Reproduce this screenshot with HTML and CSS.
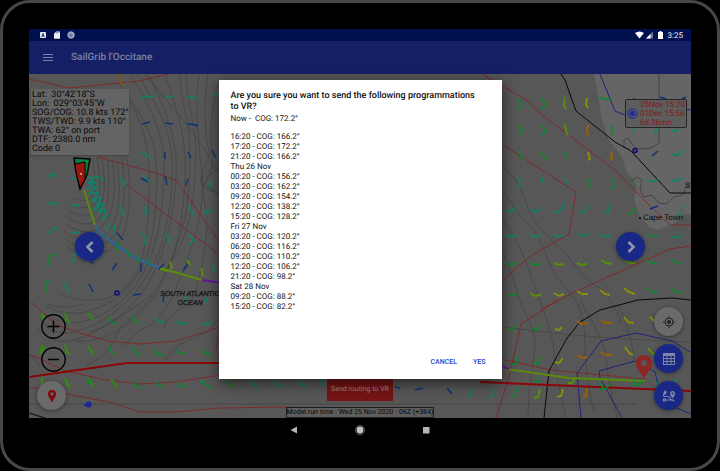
FILE: index.html
```html
<!DOCTYPE html>
<html lang="en">
<head>
<meta charset="utf-8">
<meta name="viewport" content="width=device-width, initial-scale=1">
<title>SailGrib l'Occitane</title>
<link rel="stylesheet" href="styles.css">
</head>
<body>
<div class="device">
  <div class="screen">
    <div class="status">
      <div class="status-group">
        <svg width="8" height="8" viewBox="0 0 8 8"><rect x="1" y="1" width="6" height="6" rx="1" fill="#e8eaf2"/><path d="M2.7 6 4 2.5 5.3 6M3.2 4.9h1.6" fill="none" stroke="#000f4d" stroke-width=".8"/></svg>
        <svg width="8" height="8" viewBox="0 0 8 8"><path d="M3.2.5H7V7.700H1V2.700z" fill="#eceef5"/><path d="M3.500 1.200v1M4.700 1.200v1M5.900 1.200v1" stroke="#000f4d" stroke-width=".5"/></svg>
        <svg width="8" height="8" viewBox="0 0 8 8"><circle cx="4" cy="4" r="3.500" fill="#9aa2c0"/><circle cx="3.700" cy="4.200" r="2" fill="#6f7aa6"/><circle cx="4" cy="4" r="3" fill="none" stroke="#b8bed4" stroke-dasharray="1 .6"/></svg>
      </div>
      <div class="status-group status-right">
        <svg width="9" height="8" viewBox="0 0 9 8"><path d="M0 2Q4.500-1.200 9 2L4.500 7.500z" fill="#fff"/></svg>
        <svg width="7" height="8" viewBox="0 0 7 8"><path d="M0 7.500 7 .5v7z" fill="#6b75a3"/><path d="M0 7.500 4.500 3v4.500z" fill="#fff"/></svg>
        <svg class="battery" width="5" height="8" viewBox="0 0 5 8"><path d="M1.500 0h2v1H5v7H0V1h1.500z" fill="#fff"/></svg>
        <span>3:25</span>
      </div>
    </div>
    <header class="appbar">
      <button class="menu" aria-label="Menu"><svg width="10" height="8" viewBox="0 0 10 8"><path d="M0 .5h10M0 3.500h10M0 6.500h10" stroke="#7d83a6"/></svg></button>
      <h1>SailGrib l'Occitane</h1>
    </header>
    <main class="map">
      <svg class="chart" viewBox="29 74 662 344" preserveAspectRatio="xMidYMid slice">
        <path fill="#575757" d="M29 74h662v344H29z"/>
        <path fill="#656565" d="M594 74l2 10 3 16 3 20 7 20 8 10 6 10 3 11 8 9 3 6-3 12 2 8 4 10 10 12 9 2 16-7 8-9h9V74z"/>
        <g class="line contour">
          <path d="M93 158c2 18 4 38-2 41s-13 1-17-1M97 158c4 22 4 42-3 47s-18 2-24-1M102 158c4 26 3 48-6 54s-22 2-28-2M107 158c4 28 2 54-9 62s-24 2-31-3M112 158c5 30 2 60-11 69s-27 3-35-3M117 158c5 35 2 68-13 77s-31 3-40-4M122 158c5 40 2 77-16 85s-32 3-41-5M127 158c6 45 1 86-19 93s-33 3-42-6"/>
          <path d="M127 96c16 28 22 50 22 80s-1 66-9 88-24 36-46 36-28-3-36-8M118 82c20 26 36 52 38 78s0 68-8 92-24 46-50 56-40 4-52-2M130 74c16 26 30 50 33 78s-2 74-10 98-24 52-54 66-46 3-54-2M137 74c16 24 30 48 34 76s-2 76-12 102-32 58-68 74-44 1-52-8M148 74c14 28 26 56 28 84s-6 74-15 98-30 64-70 76"/>
          <path d="M165 74c10 30 19 56 20 84s-3 70-11 94-15 44-37 64-42 26-62 25M180 74c0 22 8 44 9 60s2 60-5 88-22 62-36 79-28 22-31 33-15 26-30 31M186 74c1 28 8 46 9 66s1 48-5 76-18 44-24 55M199 74c-4 28-2 58 2 90s0 50-8 78-12 30-16 44-22 40-32 42-13 14-24 18M208 74c-4 24-3 44-2 60s4 12 3 20-9 18-8 26 18 10 19 20M219 80c-8 26-8 46-8 62s4 14 0 28-10 12-8 24 8 28-1 70-8 28-9 35-26 12-29 29"/>
          <path d="M220 158c-5 10-19 16-19 24s18 10 22 14M220 164c-5 8-15 14-15 18s12 7 18 12M145 74l50 61 25 39M38 328c13 17 30 15 45 9s22-13 36-20 33-23 33-23M46 303c8 5 25 5 36 1M29 354l11 12M222 313l-13 18-29 13-17 18"/>
          <path d="M502 166c20 15 20 30 28 46s24 32 38 44c10 14 20 27 33 33 7 6 16 20 20 34M502 192c14 14 13 20 24 30s16 22 22 38 18 28 26 38 11 30 11 48 4 50 9 65M502 218c16 22 26 48 32 66s18 46 20 68 8 50 12 66M494 230c8 20 18 44 23 62s20 38 18 55-7 40-7 71"/>
          <path d="M580 300c12 22 24 40 26 60s8 48 12 58M618 304c8 18 14 34 16 58M504 327c60 8 120 13 187 15M502 404h135M29 404h473"/>
        </g>
        <path class="line coast" d="M659 74v25M659 124v19l-8 5-13 1-6-5-4-6-4 2v7l6 3M691 183l-5 4-3 8-9 2-8 7-7-1-7-8-8 2-4-8 2-9-5-3-6 4"/>
        <path class="line red" d="M29 79l40 9 70-7 29-7M98 157l58 16 21 8 43 62M126 184l94 71M29 300l26 24 25 9 28 8 33 3 35-3 44-14M29 354l37 17 40 9 35 4 35-2 44-7M29 387l80 15 31 10h36l43-4 71-1M29 157l30-10M482 74l21 12 26 16 8 9 79 60 30 31 24 23h21M503 145l73 47-7 42-40 23-27 24M540 310l35-18 95-43 21-3M496 418l13-41 12-53 22-14 14-10M496 358l55 12 93 9M222 318l-6 32"/>
        <path class="line orange" d="M118 74l4 12"/>
        <path class="line blue" d="M600 74l15 37 12 5M691 110l-5-1M581 418l-4-45 24-32 35-8 36 8 20 12M622 418l-22-40-1-7 36-10 20 11 7 30 29 12"/>
        <path class="line black" d="M561 74l4 6 11 31 39 31 16 9 39 42h21M544 418l5-47 18-33 13-16 20-12 38-10 34-2 19 2M29 413l16 5"/>
        <path class="line route" d="M29 377l98-14h95M480 382l211 9"/>
        <path class="line lime" d="M84 190l11 35M160 268l42 12M506 369l63 9 76 3"/>
        <path class="line azure" d="M95 225l5 8 35 25 25 10"/>
        <path class="line violet" d="M202 280l20 3M500 365l9 4"/>
        <g class="line barb">
          <path class="teal" d="M142 98l6-2 5 1M165 98l7-2 2 1M188 97l9 1 1 3M213 96l5-3M142 152l7 5 1 3M47 177l6-3 5 4M72 178l7 2 3-1M95 176l9 4M119 177l6 6-2 4M143 175l2 5 5 2M210 188l2-10M47 205l6-3 5 3M72 205l8 1M119 205l5 7-3 5M143 206l4 6-2 4M189 205l4 10M204 210l3 4 5-6M48 234l7-7 3 3M72 233l8-1M142 233l4 6-2 6M165 233l5 7-2 4M189 233l4 7-3 5M213 264l2 8M72 262l3-9 4 2M67 282l-2 4 5 6M188 302l-3-7M207 302l-1-5"/>
          <path class="teal" d="M86 177l9 1-7 5 8-1-8 6 9-1-8 7 10-2-6 8 8-3-4 10 7-3-5 9 6-4-2 10 6-4M110 223l-3 9M115 225l-2 10M91 200l9 3-6 6 9 2"/>
          <path class="green" d="M47 268l3-12 5-1M46 292v-10l3-1M119 242l-3 9M127 249l2 8M137 254l2 8M147 258l2 8"/>
          <path class="blue" d="M142 124l8-2M165 123l8 1M188 124l9 1-1 2M165 152v7M188 152l3 6M212 150l4 8M141 178l7 4M165 176l2 9M188 179l-2 6M117 233l6 7M90 262l4 1M112 270l5-7M141 263v9M183 271l5-7M89 284l4 8M133 295l8-1M164 294l-1 8M159 269l5-5"/>
          <path class="g1" d="M42 313l3 8-3-5M65 313l2 7 3 3M88 313l5 7M42 345l-1 7 4-5M65 345l2 7 3 3M88 346l6 9M42 378v8M65 378l2 6 3 4M88 378l3 5 3 4M111 379l2 3 4 6"/>
          <path class="green" d="M108 317l4 5 5 2M132 316l3 5 5 2M109 345l2 6 5 4M132 347l3 5 6 3M88 378l1 6M133 380l2 5 6 3M155 381l3 4 6 2M177 382l3 5 7-1M202 380l4 5 5 3M225 380l4 4 5 3M185 353h-7l-1-4M202 349l3 4 6 2M154 349l3 5 7 1"/>
          <path class="teal" d="M155 317l4 5h6M177 319l2 5 9-1M201 323l4 2 6-3M201 380l2 4M249 379l4 6 4 2M273 379l4 6 4 2M297 379l4 6 5 2M320 379l4 8M470 388v8h-2M493 389v7l-3 2"/>
          <path class="blue" d="M395 387l5 1M415 390l8-2M447 388l5 6"/>
          <path class="green" d="M518 99l4 7-4 4M541 98l5 6-4 5M600 97l4 2h7M518 125l5 6-4 4M541 125l5 6-4 4M611 125l2 6-2 4M518 151l5 8M541 152l5 7-1 1M564 152l4 7M612 179l2 6-2 4M588 179l2 6-2 3M634 180l-1 6M628 214l5-1 2-5M647 235l5 1 6-1M506 263l4 2 7-2M530 262l4 3 7-1M647 260l5 3 6 1M671 259l5 4h6M507 294l4 2 6-2M671 288l4 4 6 1M647 288l5 4 6 1M508 329l4 1 5-5M532 329l5 1 4-5M512 364l5 0v-8M534 363l4 1 3-7M533 381l5 1 2-5M511 397l4-1 2-8M600 389l5 0 5-5M634 378l1 8 8-5M600 383l4 6"/>
          <path class="lime" d="M565 97l-1 8 2 4M565 124l1 7 2 4M554 263l5 2 5-1M577 263l5 2 5-1M601 260l5 3 6 1M625 260l5 3 5 0M530 293l5 3 6-1M534 398l4-1 2-8M568 383l4 0 3-4"/>
          <path class="teal" d="M518 178l2 6-3 4M542 178l2 7M565 178l2 7M506 210l5 2 6-5M530 209l5 3 7-5M554 212h5l6-8M580 212h5l3-7M604 213l4-1 3-8M506 235l5 2 7-2M530 235l5 2 7-2M553 234l5 3 7-2M577 234l5 2 7-2M600 235l5 2 7-2M634 125v7M656 125v7h-2M671 131h5l3-5M671 153l4 3 8-5M647 179l5 3 6-2M671 180l4 1 8-3M671 236l5 2 6-3M682 205l-1 9-4 1M655 381l3 4M674 379l3 3"/>
          <path class="blue" d="M652 156l6-5M650 209l8-3M660 97l6 2M634 98v2M682 99l4-2"/>
          <path class="yellow" d="M587 98l-1 7 2 3M588 152l2 7-2 1M554 293l5 3 5-2M577 291l5 3 6 0M600 290l5 4 5 1M624 288l5 4 6 2M555 329l4 1 3-3M555 362l4 1 4-5M624 317l4 5 6 1M625 347l4 6 4 2M650 317l4 4M557 397l4-1 2-7"/>
          <path class="amber" d="M588 125l-1 7 2 3M612 152l-1 7 2 1M577 321l4 3 7-1M601 320l4 3 7 0M577 355l5 3 6-1M601 352l5 3 6 0M583 397l3-1 1-8"/>
          <path class="lime" d="M648 348l4 5 3 1M187 260l3 5M201 268l2 8M170 261l2 8M160 269l8 2"/>
        </g>
        <circle class="ring" cx="117" cy="293" r="2"/><circle class="ring" cx="635" cy="150.500" r="2"/>
        <path d="M84 405h4" class="line dotline"/><circle cx="88.500" cy="404.500" r="3" fill="#1b2a92"/>
        <path fill="#08803f" stroke="#050505" stroke-width="1.500" d="M74 158l16 1-3 16-7 14-4-17z"/>
        <path fill="#9c1511" stroke="#050505" d="M75 164l10-2v17l-5 9-4-16z"/><circle cx="81" cy="174" r="1" fill="#bbb"/>
        <path d="M644 380c-2-8-8-10-8-17a8 8 0 0 1 16 0c0 7-6 9-8 17z" fill="#8e2626"/><circle cx="644" cy="363" r="3" fill="#575757"/>
        <circle cx="640" cy="218" r="1" fill="#000"/>
        <g class="sea"><text x="190" y="296">SOUTH ATLANTIC</text><text x="190" y="305">OCEAN</text></g>
        <g class="town"><text x="643" y="220">Cape Town</text><text x="685" y="188">S</text></g>
      </svg>

      <div class="info">Lat:&nbsp; 30°42'18"S<br>Lon:&nbsp; 029°03'45"W<br>SOG/COG: 10.8 kts 172°<br>TWS/TWD: 9.9 kts 110°<br>TWA: 62° on port<br>DTF: 2380.0 nm<br>Code 0</div>
      <div class="routing">
        <svg width="11" height="11" viewBox="0 0 12 12"><circle cx="6" cy="6" r="5" fill="none" stroke="#1f2f88" stroke-width="1.200"/><circle cx="6" cy="6" r="3" fill="#1f2f88"/></svg>
        <span>25Nov 15:20<br>01Dec 15:56<br>6d 36mn</span>
      </div>
      <button class="fab prev" aria-label="Previous"><svg width="14" height="14" viewBox="0 0 14 14"><path d="M9.500 2 4.500 7l5 5" fill="none" stroke="#9094a4" stroke-width="2.600"/></svg></button>
      <button class="fab next" aria-label="Next"><svg width="14" height="14" viewBox="0 0 14 14"><path d="M4.500 2l5 5-5 5" fill="none" stroke="#9094a4" stroke-width="2.600"/></svg></button>
      <div class="zoom">
        <button aria-label="Zoom in"><svg width="25" height="25" viewBox="0 0 25 25"><circle cx="12.500" cy="12.500" r="11.700" fill="none" stroke="#000" stroke-width="1.400"/><path d="M12.500 6.500v12M6.500 12.500h12" stroke="#000" stroke-width="1.500"/></svg></button>
        <button aria-label="Zoom out"><svg width="25" height="25" viewBox="0 0 25 25"><circle cx="12.500" cy="12.500" r="11.700" fill="none" stroke="#000" stroke-width="1.400"/><path d="M7 12.500h11" stroke="#000" stroke-width="1.500"/></svg></button>
      </div>
      <button class="fab light pin" aria-label="Waypoint"><svg width="14" height="14" viewBox="0 0 14 14"><path fill-rule="evenodd" d="M7 13.500C5.500 10 3 8 3 5a4 4 0 0 1 8 0c0 3-2.500 5-4 8.500zM7 3.300a1.600 1.600 0 1 0 0 3.200 1.600 1.600 0 0 0 0-3.200z" fill="#820909"/></svg></button>
      <div class="tools">
        <button class="fab light" aria-label="Locate"><svg width="14" height="14" viewBox="0 0 14 14"><circle cx="7" cy="7" r="4" fill="none" stroke="#222"/><circle cx="7" cy="7" r="2" fill="#222"/><path d="M7 1v2M7 11v2M1 7h2M11 7h2" stroke="#222"/></svg></button>
        <button class="fab" aria-label="Table"><svg width="14" height="14" viewBox="0 0 14 14"><path fill="#8086a8" d="M1 1h12v12H1z"/><path fill="#192780" d="M2 4h2.500v2H2zM5.500 4h3v2h-3zM9.500 4H12v2H9.500zM2 7h2.500v2H2zM5.500 7h3v2h-3zM9.500 7H12v2H9.500zM2 10h2.500v2H2zM5.500 10h3v2h-3zM9.500 10H12v2H9.500z"/></svg></button>
        <button class="fab" aria-label="Routing"><svg width="14" height="14" viewBox="0 0 14 14"><g fill="none" stroke="#8086a8" stroke-width="1.200"><circle cx="2.500" cy="11" r="1.200"/><path d="M4 11h7M3 4.500C1 5 .8 7.500 3 7.500h3c2 0 2 3.500 4 3.500"/></g><path fill="#8086a8" d="M3 1l2 2-1.500 2.500L1 5z"/><path fill="#8086a8" fill-rule="evenodd" d="M10.500 9.500C9.500 7.500 8 6.500 8 4.500a2.500 2.500 0 0 1 5 0c0 2-1.500 3-2.500 5zM10.500 3.500a1 1 0 1 0 0 2 1 1 0 0 0 0-2z"/><circle cx="11.500" cy="11.500" r="1" fill="#8086a8"/></svg></button>
      </div>
      <div class="foot">
        <button class="send">Send routing to VR</button>
        <div class="model">Model run time : Wed 25 Nov 2020 - 06Z (+384)</div>
      </div>
    </main>
    <div class="overlay">
      <section class="dialog" role="dialog" aria-labelledby="question">
        <h2 id="question">Are you sure you want to send the following programmations<br>to VR?</h2>
        <p>Now -&nbsp; COG: 172.2°</p>
        <p class="plan">16:20 - COG: 166.2°<br>17:20 - COG: 172.2°<br>21:20 - COG: 166.2°<br>Thu 26 Nov<br>00:20 - COG: 156.2°<br>03:20 - COG: 162.2°<br>09:20 - COG: 154.2°<br>12:20 - COG: 138.2°<br>15:20 - COG: 128.2°<br>Fri 27 Nov<br>03:20 - COG: 120.2°<br>06:20 - COG: 116.2°<br>09:20 - COG: 110.2°<br>12:20 - COG: 106.2°<br>21:20 - COG: 98.2°<br>Sat 28 Nov<br>09:20 - COG: 88.2°<br>15:20 - COG: 82.2°</p>
        <div class="actions"><button>CANCEL</button><button>YES</button></div>
      </section>
    </div>
  </div>
  <nav class="sysnav">
    <button aria-label="Back"><svg width="10" height="10" viewBox="0 0 10 10"><path d="M8 1.500v7L1.500 5z" fill="#b4b4b4"/></svg></button>
    <button aria-label="Home"><svg width="10" height="10" viewBox="0 0 10 10"><circle cx="5" cy="5" r="4.500" fill="none" stroke="#8a8a8a" stroke-width=".7"/><circle cx="5" cy="5" r="3.400" fill="#c4c4c4"/></svg></button>
    <button aria-label="Recents"><svg width="10" height="10" viewBox="0 0 10 10"><path d="M2 2h6.500v6.500H2z" fill="#b4b4b4"/></svg></button>
  </nav>
</div>
</body>
</html>
```
FILE: styles.css
```css
* { box-sizing: border-box; }

body {
  margin: 0;
  background: #000;
  color: #111;
  font: 8px/9px Roboto, "Liberation Sans", sans-serif;
  text-rendering: geometricPrecision;
}

button {
  padding: 0;
  border: 0;
  background: none;
  color: inherit;
  font: inherit;
  text-rendering: inherit;
}

svg { display: block; }

.device {
  display: flex;
  flex-direction: column;
  min-height: 100vh;
  padding: 26px;
  border: 3px solid #474747;
  border-radius: 30px;
  background: #000;
}

.screen {
  position: relative;
  display: flex;
  flex: 1;
  flex-direction: column;
}

.status {
  display: flex;
  align-items: center;
  justify-content: space-between;
  height: 12px;
  padding: 0 8px 0 10px;
  background: #000f4d;
  color: #f4f4f8;
}

.status-group { display: flex; align-items: center; gap: 6px; }
.status-right { gap: 2px; }
.battery { margin: 0 3px; }

.appbar {
  display: flex;
  align-items: center;
  gap: 18px;
  height: 33px;
  padding: 0 14px;
  background: #141f66;
}

.appbar h1 {
  margin: 0;
  color: #7c82a4;
  font-size: 10px;
  font-weight: 500;
  line-height: 12px;
}

.map {
  position: relative;
  flex: 1;
  min-height: 344px;
  overflow: hidden;
  background: #575757;
}

.chart { position: absolute; inset: 0; width: 100%; height: 100%; }

.line { fill: none; stroke-width: 1; }
.contour { stroke: #3a3a3a; stroke-width: .5; }
.coast { stroke: #444; }
.red { stroke: #861f22; stroke-width: .8; }
.orange { stroke: #855800; stroke-width: 1.500; }
.blue { stroke: #20247c; }
.black { stroke: #080808; }
.route { stroke: #8c0608; stroke-width: 2; }
.line.lime { stroke: #5c8a0b; stroke-width: 2; }
.azure { stroke: #2766a0; stroke-width: 2; }
.violet { stroke: #681698; stroke-width: 2; }
.barb { stroke-width: 1.500; }
.barb .teal { stroke: #08866a; }
.barb .green { stroke: #088a2a; }
.barb .g1 { stroke: #2a9208; stroke-width: 2; }
.barb .blue { stroke: #0b3476; }
.barb .lime { stroke: #569008; stroke-width: 2; }
.barb .yellow { stroke: #8c8c08; stroke-width: 2; }
.barb .amber { stroke: #9a6006; stroke-width: 2; }
.ring { fill: #575757; stroke: #0a0a78; stroke-width: 1.500; }
.dotline { stroke: #1b2a92; stroke-width: 2; }
.sea { fill: #444; stroke: #1d1d1d; stroke-width: .5; font: italic 7px "Liberation Sans", sans-serif; text-anchor: middle; }
.town { fill: #050505; font: 8px "Liberation Sans", sans-serif; }

.info {
  position: absolute;
  top: 15px;
  left: 2px;
  padding: 2px 0 1px 1px;
  background: #646464;
  box-shadow: 0 1px 2px #3338;
  color: #090909;
  font-size: 9px;
}

.routing {
  position: absolute;
  top: 25px;
  right: 4px;
  display: flex;
  align-items: center;
  gap: 2px;
  padding: 0 1px;
  border: 1px solid #252525;
  border-radius: 2px;
  background: #5d5d5d;
  color: #861616;
}

.fab {
  display: grid;
  place-items: center;
  width: 29px;
  height: 29px;
  border-radius: 50%;
  background: #1a2885;
  box-shadow: 0 1px 4px #0006;
}

.light { background: #6a6a6a; }

.prev, .next { position: absolute; top: 50%; margin-top: -14px; }
.prev { left: 46px; }
.next { right: 46px; }

.zoom {
  position: absolute;
  bottom: 46px;
  left: 12px;
  display: grid;
  gap: 8px;
}

.pin { position: absolute; bottom: 8px; left: 8px; }

.tools {
  position: absolute;
  right: 8px;
  bottom: 8px;
  display: grid;
  gap: 8px;
}

.foot {
  position: absolute;
  right: 0;
  bottom: 0;
  left: 0;
  display: flex;
  flex-direction: column;
  align-items: center;
  gap: 6px;
  font-size: 7px;
}

.send {
  height: 24px;
  padding: 0 4px;
  background: #761417;
  color: #9a8a8a;
}

.model {
  border: 1px solid #1e1e1e;
  background: #5e5e5e;
  color: #050505;
}

.overlay {
  position: absolute;
  inset: 0;
  display: grid;
  place-items: center;
  padding-top: 12px;
}

.dialog {
  display: flex;
  flex-direction: column;
  width: 283px;
  min-height: 299px;
  padding: 11px 12px 12px;
  background: #fff;
  box-shadow: 0 4px 14px #0009;
  line-height: 10px;
}

.dialog h2 {
  margin: 0 0 1px;
  font-size: 9px;
  font-weight: 500;
  line-height: 11px;
}

.dialog p { margin: 0; }
.dialog .plan { margin-top: 8px; }

.actions {
  display: flex;
  justify-content: flex-end;
  gap: 16px;
  margin-top: auto;
  padding-right: 4px;
  color: #2a3fd0;
  font-size: 7px;
  font-weight: 500;
}

.sysnav {
  display: flex;
  align-items: center;
  justify-content: center;
  gap: 56px;
  height: 24px;
}
```
